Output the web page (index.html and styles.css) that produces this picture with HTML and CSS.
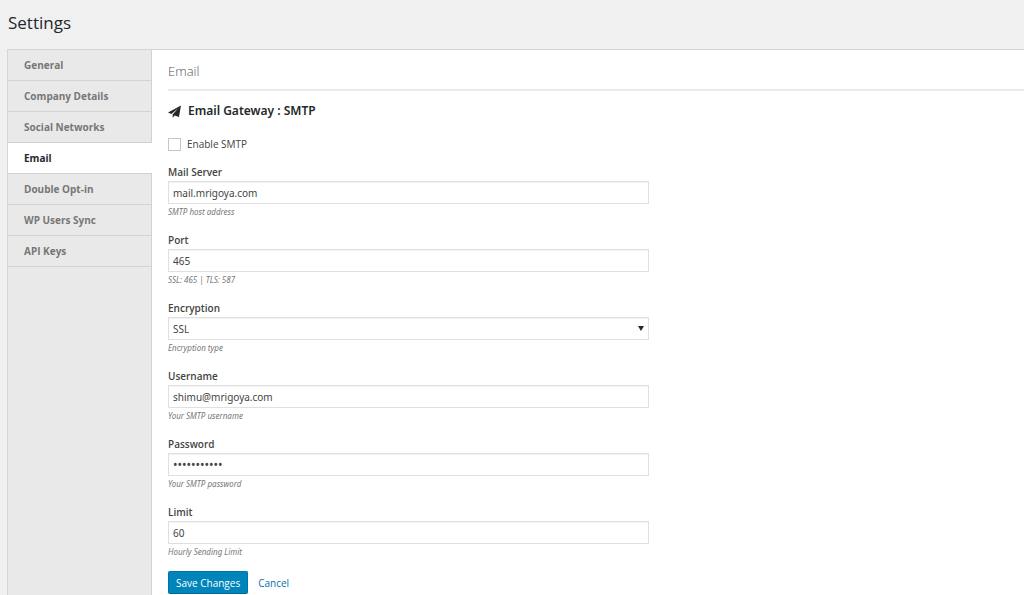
FILE: index.html
```html
<!DOCTYPE html>
<html lang="en">
<head>
<meta charset="utf-8">
<title>Settings</title>
<link rel="stylesheet" href="styles.css">
</head>
<body>
<h1 class="page-title">Settings</h1>
<div class="settings">
  <nav class="tabs">
    <a class="tab" href="#general">General</a>
    <a class="tab" href="#company">Company Details</a>
    <a class="tab" href="#social">Social Networks</a>
    <a class="tab tab-active" href="#email" aria-current="page">Email</a>
    <a class="tab" href="#optin">Double Opt-in</a>
    <a class="tab" href="#sync">WP Users Sync</a>
    <a class="tab" href="#api">API Keys</a>
  </nav>
  <main class="panel">
    <h2 class="panel-title">Email</h2>
    <h3 class="gateway">
      <svg class="gateway-icon" viewBox="0 0 14 14" aria-hidden="true"><path d="M14 0.5 L0 8 L3.6 9.6 L11 3.4 L5 10.2 L5 13.8 L7.2 11.2 L11.8 13 Z"/></svg>
      Email Gateway : SMTP
    </h3>
    <form class="form">
      <label class="check"><input class="checkbox" type="checkbox"> Enable SMTP</label>
      <div class="field">
        <label class="label" for="server">Mail Server</label>
        <input class="control" id="server" type="text" value="mail.mrigoya.com">
        <p class="hint">SMTP host address</p>
      </div>
      <div class="field">
        <label class="label" for="port">Port</label>
        <input class="control" id="port" type="text" value="465">
        <p class="hint">SSL: 465 | TLS: 587</p>
      </div>
      <div class="field">
        <label class="label" for="encryption">Encryption</label>
        <div class="select-wrap">
          <select class="control select" id="encryption"><option>SSL</option></select>
          <svg class="arrow" viewBox="0 0 6 5" aria-hidden="true"><path d="M0 0 H6 L3 5 Z"/></svg>
        </div>
        <p class="hint">Encryption type</p>
      </div>
      <div class="field">
        <label class="label" for="username">Username</label>
        <input class="control" id="username" type="text" value="shimu@mrigoya.com">
        <p class="hint">Your SMTP username</p>
      </div>
      <div class="field">
        <label class="label" for="password">Password</label>
        <input class="control password" id="password" type="password" value="abcdefghijk">
        <p class="hint">Your SMTP password</p>
      </div>
      <div class="field">
        <label class="label" for="limit">Limit</label>
        <input class="control" id="limit" type="text" value="60">
        <p class="hint">Hourly Sending Limit</p>
      </div>
      <div class="actions">
        <button class="save" type="button">Save Changes</button>
        <a class="cancel" href="#cancel">Cancel</a>
      </div>
    </form>
  </main>
</div>
</body>
</html>
```
FILE: styles.css
```css
* { box-sizing: border-box; }
body {
  margin: 0;
  min-height: 100vh;
  display: flex;
  flex-direction: column;
  background: #f0f0f0;
  color: #444;
  font: 10px/16px "Open Sans", "Noto Sans", sans-serif;
}
h1, h2, h3, p { margin: 0; }
.page-title {
  padding: 11px 8px 14px;
  font-size: 17px;
  line-height: 24px;
  font-weight: 400;
  color: #23282d;
}
.settings {
  flex: 1;
  display: flex;
  margin-left: 7px;
  border-top: 1px solid #d5d5d5;
  border-left: 1px solid #d5d5d5;
}
.tabs {
  width: 144px;
  flex: none;
  background: #e9e9e9;
  box-shadow: inset -1px 0 #d2d2d2;
}
.tab {
  display: block;
  height: 31px;
  padding: 0 16px;
  line-height: 30px;
  font-weight: 700;
  color: #777;
  text-decoration: none;
  border-bottom: 1px solid #d2d2d2;
}
.tab-active { background: #fff; color: #23282d; }
.panel {
  flex: 1;
  min-width: 0;
  padding: 10px 0 1px 16px;
  background: #fff;
}
.panel-title {
  padding-bottom: 6px;
  border-bottom: 2px solid #eaeaea;
  font-size: 13px;
  line-height: 23px;
  font-weight: 300;
  color: #555;
}
.gateway {
  display: flex;
  align-items: center;
  gap: 7px;
  margin-top: 10px;
  font: 600 12px/20px "Noto Sans", "Open Sans", sans-serif;
  color: #23282d;
}
.gateway-icon { width: 13px; height: 13px; fill: #23282d; }
.form { max-width: 481px; }
.check {
  display: flex;
  align-items: center;
  gap: 6px;
  margin: 15px 0 11px;
  font-weight: 500;
}
.checkbox {
  appearance: none;
  width: 13px;
  height: 13px;
  margin: 0;
  border: 1px solid #c4c8cc;
  background: #fff;
}
.field { margin-bottom: 11px; }
.label { display: block; line-height: 18px; font-weight: 600; }
.control {
  display: block;
  width: 100%;
  height: 23px;
  margin: 0;
  padding: 0 4px;
  border: 1px solid #e0e0e0;
  border-radius: 0;
  background: #fff;
  box-shadow: inset 0 1px 1px #f2f2f2;
  color: #444;
  font: 10px/16px "Noto Sans", "Open Sans", sans-serif;
}
.password { font-size: 12px; }
.select-wrap { position: relative; }
.select { appearance: none; }
.arrow {
  position: absolute;
  right: 5px;
  top: 9px;
  width: 6px;
  height: 5px;
  fill: #23282d;
  pointer-events: none;
}
.hint {
  font-family: "Noto Sans", "Open Sans", sans-serif;
  font-size: 8px;
  font-style: italic;
  color: #777;
}
.actions { display: flex; align-items: center; gap: 10px; }
.save {
  height: 23px;
  padding: 0 7px;
  border: 1px solid #0073aa;
  border-bottom-color: #006799;
  border-radius: 2px;
  background: #0085ba;
  color: #fff;
  font: 10px/16px "Open Sans", "Noto Sans", sans-serif;
}
.cancel { color: #0073aa; text-decoration: none; }
```
